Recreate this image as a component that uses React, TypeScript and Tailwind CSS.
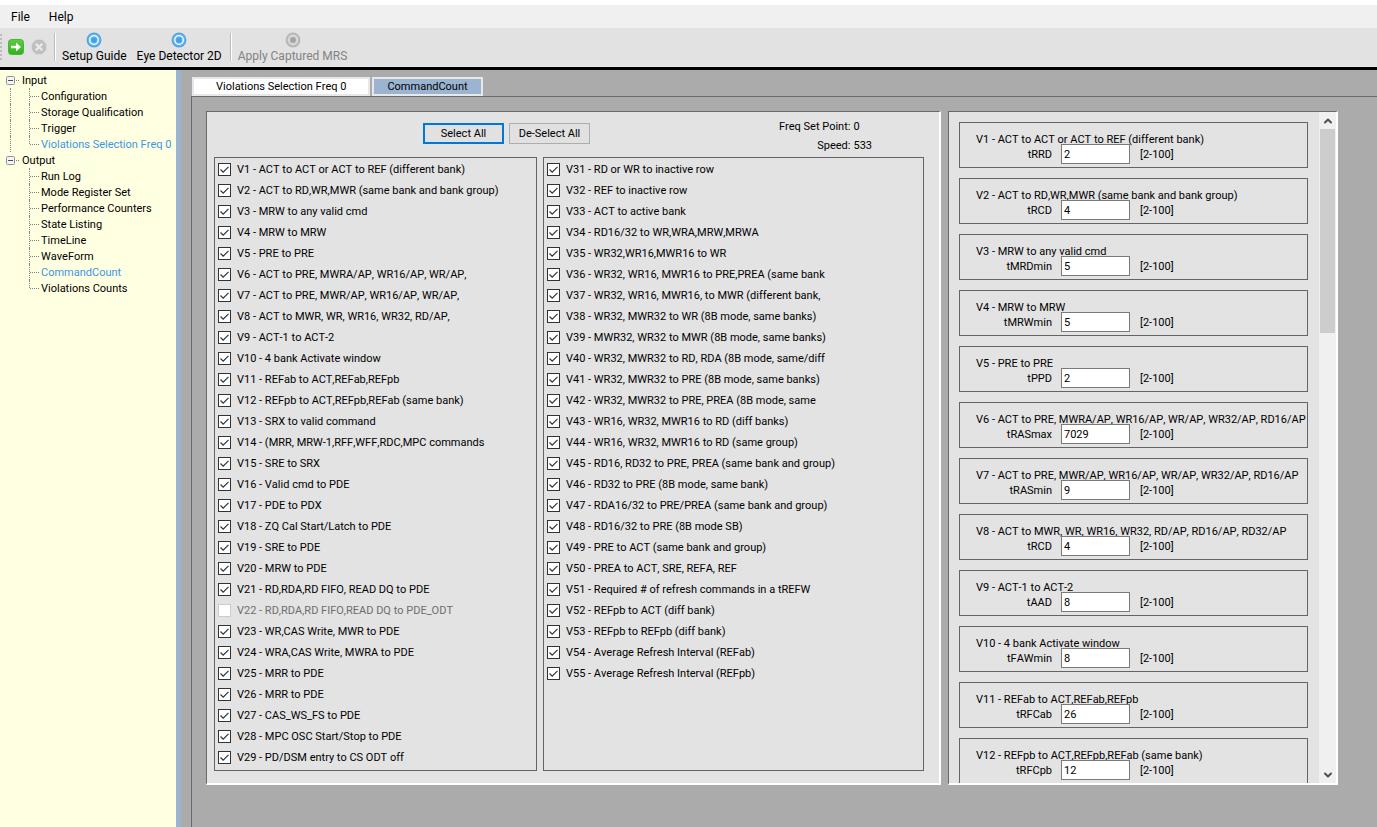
import { useState } from "react";
import { ChevronDown, ChevronUp } from "lucide-react";
import clsx from "clsx";

const inputItems = [
  "Configuration",
  "Storage Qualification",
  "Trigger",
  "Violations Selection Freq 0",
];

const outputItems = [
  "Run Log",
  "Mode Register Set",
  "Performance Counters",
  "State Listing",
  "TimeLine",
  "WaveForm",
  "CommandCount",
  "Violations Counts",
];

const openPages = ["Violations Selection Freq 0", "CommandCount"];

const leftChecks = [
  "V1 - ACT to ACT or ACT to REF (different bank)",
  "V2 - ACT to RD,WR,MWR (same bank and bank group)",
  "V3 - MRW to any valid cmd",
  "V4 - MRW to MRW",
  "V5 - PRE to PRE",
  "V6 - ACT to PRE, MWRA/AP, WR16/AP, WR/AP,",
  "V7 - ACT to PRE, MWR/AP, WR16/AP, WR/AP,",
  "V8 - ACT to MWR, WR, WR16, WR32, RD/AP,",
  "V9 - ACT-1 to ACT-2",
  "V10 - 4 bank Activate window",
  "V11 - REFab to ACT,REFab,REFpb",
  "V12 - REFpb to ACT,REFpb,REFab (same bank)",
  "V13 - SRX to valid command",
  "V14 - (MRR, MRW-1,RFF,WFF,RDC,MPC commands",
  "V15 - SRE to SRX",
  "V16 - Valid cmd to PDE",
  "V17 - PDE to PDX",
  "V18 - ZQ Cal Start/Latch to PDE",
  "V19 - SRE to PDE",
  "V20 - MRW to PDE",
  "V21 - RD,RDA,RD FIFO, READ DQ to PDE",
  "V22 - RD,RDA,RD FIFO,READ DQ to PDE_ODT",
  "V23 - WR,CAS Write, MWR to PDE",
  "V24 - WRA,CAS Write, MWRA to PDE",
  "V25 - MRR to PDE",
  "V26 - MRR to PDE",
  "V27 - CAS_WS_FS to PDE",
  "V28 - MPC OSC Start/Stop to PDE",
  "V29 - PD/DSM entry to CS ODT off",
];

const rightChecks = [
  "V31 - RD or WR to inactive row",
  "V32 - REF to inactive row",
  "V33 - ACT to active bank",
  "V34 - RD16/32 to WR,WRA,MRW,MRWA",
  "V35 - WR32,WR16,MWR16 to WR",
  "V36 - WR32, WR16, MWR16 to PRE,PREA (same bank",
  "V37 - WR32, WR16, MWR16, to MWR (different bank,",
  "V38 - WR32, MWR32 to WR (8B mode, same banks)",
  "V39 - MWR32, WR32 to MWR (8B mode, same banks)",
  "V40 - WR32, MWR32 to RD, RDA (8B mode, same/diff",
  "V41 - WR32, MWR32 to PRE (8B mode, same banks)",
  "V42 - WR32, MWR32 to PRE, PREA (8B mode, same",
  "V43 - WR16, WR32, MWR16 to RD (diff banks)",
  "V44 - WR16, WR32, MWR16 to RD (same group)",
  "V45 - RD16, RD32 to PRE, PREA (same bank and group)",
  "V46 - RD32 to PRE (8B mode, same bank)",
  "V47 - RDA16/32 to PRE/PREA (same bank and group)",
  "V48 - RD16/32 to PRE (8B mode SB)",
  "V49 - PRE to ACT (same bank and group)",
  "V50 - PREA to ACT, SRE, REFA, REF",
  "V51 - Required # of refresh commands in a tREFW",
  "V52 - REFpb to ACT (diff bank)",
  "V53 - REFpb to REFpb (diff bank)",
  "V54 - Average Refresh Interval (REFab)",
  "V55 - Average Refresh Interval (REFpb)",
];

const disabledChecks = ["V22 - RD,RDA,RD FIFO,READ DQ to PDE_ODT"];

const params = [
  { title: "V1 - ACT to ACT or ACT to REF (different bank)", name: "tRRD", value: "2" },
  { title: "V2 - ACT to RD,WR,MWR (same bank and bank group)", name: "tRCD", value: "4" },
  { title: "V3 - MRW to any valid cmd", name: "tMRDmin", value: "5" },
  { title: "V4 - MRW to MRW", name: "tMRWmin", value: "5" },
  { title: "V5 - PRE to PRE", name: "tPPD", value: "2" },
  { title: "V6 - ACT to PRE, MWRA/AP, WR16/AP, WR/AP, WR32/AP, RD16/AP", name: "tRASmax", value: "7029" },
  { title: "V7 - ACT to PRE, MWR/AP, WR16/AP, WR/AP, WR32/AP, RD16/AP", name: "tRASmin", value: "9" },
  { title: "V8 - ACT to MWR, WR, WR16, WR32, RD/AP, RD16/AP, RD32/AP", name: "tRCD", value: "4" },
  { title: "V9 - ACT-1 to ACT-2", name: "tAAD", value: "8" },
  { title: "V10 - 4 bank Activate window", name: "tFAWmin", value: "8" },
  { title: "V11 - REFab to ACT,REFab,REFpb", name: "tRFCab", value: "26" },
  { title: "V12 - REFpb to ACT,REFpb,REFab (same bank)", name: "tRFCpb", value: "12" },
];

const RunIcon = () => (
  <svg viewBox="0 0 16 16" className="size-4">
    <defs>
      <linearGradient id="run" x1="0" y1="0" x2="0" y2="1">
        <stop offset="0" stopColor="#5ccb45" />
        <stop offset="1" stopColor="#2fb31c" />
      </linearGradient>
    </defs>
    <rect x="0.5" y="0.5" width="15" height="15" rx="3" fill="url(#run)" stroke="#43b832" />
    <path d="M3 6.8H8V3.6L13 8L8 12.4V9.2H3Z" fill="#fff" />
  </svg>
);

const StopIcon = () => (
  <svg viewBox="0 0 16 16" className="size-4">
    <path d="M5 .8H11L15.2 5V11L11 15.2H5L.8 11V5Z" fill="#c0c0c0" />
    <path d="M4.8 4.8L11.2 11.2M11.2 4.8L4.8 11.2" stroke="#ececec" strokeWidth="2.2" />
  </svg>
);

const TargetIcon = ({ muted = false }: { muted?: boolean }) => (
  <svg viewBox="0 0 16 16" className="size-4">
    <circle cx="8" cy="8" r="7.4" fill={muted ? "#b4b4b4" : "#4a9fe0"} />
    <circle cx="8" cy="8" r="6.4" fill={muted ? "#bebebe" : "#62b4f0"} />
    <circle cx="8" cy="8" r="4.3" fill={muted ? "#c4c4c4" : "#6ebcf4"} stroke={muted ? "#e2e2e2" : "#fff"} strokeWidth="1.3" />
    <circle cx="8" cy="8" r="2.8" fill={muted ? "#a4a4a4" : "#429fe8"} />
  </svg>
);

const Separator = () => <div className="h-7 w-[2px] border-l border-[#bdbdbd] bg-white" />;

const ToolButton = ({ label, disabled = false }: { label: string; disabled?: boolean }) => (
  <button disabled={disabled} className="flex flex-col items-center pt-[2px] text-black disabled:text-[#838383]">
    <TargetIcon muted={disabled} />
    <span className="leading-4">{label}</span>
  </button>
);

interface TreeGroupProps {
  label: string;
  items: string[];
  selected: string[];
  last?: boolean;
}

const TreeGroup = ({ label, items, selected, last = false }: TreeGroupProps) => (
  <li>
    <button className="flex h-4 items-center">
      <svg viewBox="0 0 9 9" className="ml-[6px] size-[9px]">
        <rect x="0.5" y="0.5" width="8" height="8" rx="1" fill="#f4f4f0" stroke="#919191" />
        <path d="M2 4.5H7" stroke="#3b4f81" />
      </svg>
      <span className="mr-[3px] ml-px w-[3px] border-t border-dotted border-[#808080]" />
      <span className="leading-[14px] pt-[2px]">{label}</span>
    </button>
    <ul>
      {items.map((item, i) => (
        <li key={item} className="flex h-4 pl-[10px]">
          <span className={clsx("w-[19px]", !last && "border-l border-dotted border-[#808080]")} />
          <span
            className={clsx(
              "border-l border-dotted border-[#808080]",
              i === items.length - 1 ? "h-2" : "h-4"
            )}
          />
          <span className="mt-2 mr-[2px] w-[9px] border-t border-dotted border-[#808080]" />
          <a
            href="#"
            className={clsx("leading-[18px] whitespace-nowrap", selected.includes(item) && "text-[#3d95e6]")}
          >
            {item}
          </a>
        </li>
      ))}
    </ul>
  </li>
);

interface CheckListProps {
  items: string[];
  checked: Record<string, boolean>;
  onToggle: (item: string) => void;
}

const CheckList = ({ items, checked, onToggle }: CheckListProps) => (
  <div className="border border-[#646464] pt-px pb-[2px] pl-[3px]">
    {items.map((item) => {
      const disabled = disabledChecks.includes(item);
      return (
        <label
          key={item}
          className={clsx("flex h-[21px] items-center gap-[6px] whitespace-nowrap", disabled && "text-[#6d6d6d]")}
        >
          <span className="relative size-[13px]">
            <input
              type="checkbox"
              checked={checked[item]}
              disabled={disabled}
              onChange={() => onToggle(item)}
              className="peer block size-[13px] appearance-none border border-[#333333] bg-white disabled:border-[#cccccc]"
            />
            <svg
              viewBox="0 0 13 13"
              className="pointer-events-none absolute inset-0 hidden size-[13px] peer-checked:block"
            >
              <path d="M2.5 6.5L5.2 9.2L10.5 3.8" fill="none" stroke="#333" strokeWidth="1.2" />
            </svg>
          </span>
          {item}
        </label>
      );
    })}
  </div>
);

const ParamCard = ({ title, name, value }: { title: string; name: string; value: string }) => {
  const id = title.split(" ")[0];
  return (
    <div className="h-[46px] shrink-0 overflow-hidden border border-[#646464] pt-[11px] pl-4 whitespace-nowrap">
      <p className="h-[10px] leading-3">{title}</p>
      <div className="flex h-5 items-center">
        <label htmlFor={id} className="w-[76px] pt-[2px] text-right">
          {name}
        </label>
        <input
          id={id}
          defaultValue={value}
          className="mr-[10px] ml-[9px] h-5 w-[69px] border border-[#7a7a7a] bg-white px-[2px]"
        />
        <span className="pt-[2px]">[2-100]</span>
      </div>
    </div>
  );
};

export default function App() {
  const [page, setPage] = useState(openPages[0]);
  const [checked, setChecked] = useState<Record<string, boolean>>(() =>
    Object.fromEntries([...leftChecks, ...rightChecks].map((c) => [c, !disabledChecks.includes(c)]))
  );

  const setAll = (value: boolean) =>
    setChecked((prev) =>
      Object.fromEntries(Object.keys(prev).map((c) => [c, value && !disabledChecks.includes(c)]))
    );

  const toggle = (item: string) => setChecked((prev) => ({ ...prev, [item]: !prev[item] }));

  return (
    <div className="flex min-h-screen flex-col bg-white pt-[5px] font-[Roboto,'Liberation_Sans',sans-serif] text-[11px] leading-4 text-black [font-kerning:none]">
      <nav className="flex h-[23px] items-center gap-[19px] bg-[#f0f0f0] pl-[11px] text-[12px]">
        <button>File</button>
        <button>Help</button>
      </nav>

      <div className="flex h-[39px] items-center border-b border-[#e8e8e8] bg-[#e2e2e2] text-[12px]">
        <div className="h-[26px] border-l-2 border-dotted border-[#bcbcbc]" />
        <button aria-label="Run" className="ml-[6px]">
          <RunIcon />
        </button>
        <button aria-label="Stop" disabled className="mr-[7px] ml-[7px]">
          <StopIcon />
        </button>
        <Separator />
        <div className="mr-2 ml-[6px] flex gap-[10px]">
          <ToolButton label="Setup Guide" />
          <ToolButton label="Eye Detector 2D" />
        </div>
        <Separator />
        <div className="ml-[6px]">
          <ToolButton label="Apply Captured MRS" disabled />
        </div>
      </div>

      <div className="flex grow border-t-[3px] border-black bg-[#ababab]">
        <aside className="w-[181px] shrink-0 border-r-[5px] border-[#9ab4d1] bg-[#ffffe1] pt-[2px]">
          <ul>
            <TreeGroup label="Input" items={inputItems} selected={openPages} />
            <TreeGroup label="Output" items={outputItems} selected={openPages} last />
          </ul>
        </aside>

        <main className="flex grow flex-col pt-[7px] pl-[10px]">
          <div role="tablist" className="flex gap-[2px] pl-px">
            {openPages.map((p) => (
              <button
                key={p}
                role="tab"
                aria-selected={p === page}
                onClick={() => setPage(p)}
                className={clsx(
                  "h-[19px] border-2 border-[#e8e8e8]",
                  p === page ? "bg-white px-[22px]" : "bg-[#9ab4d1] px-[13px]"
                )}
              >
                {p}
              </button>
            ))}
          </div>

          <div className="flex grow items-start border-t border-l border-[#696969] pt-[14px] pr-[39px] pl-[14px]">
            <div className="flex grow items-stretch gap-[7px]">
              <section className="flex-[710] border-t border-r-2 border-b-2 border-l border-t-[#696969] border-r-white border-b-white border-l-[#696969] bg-[#e3e3e3] pr-[15px] pb-3 pl-[7px]">
                <div className="flex h-[45px] items-start justify-between pt-[5px] pr-[52px]">
                  <div className="flex gap-[5px] pt-[6px] pl-[209px]">
                    <button
                      onClick={() => setAll(true)}
                      className="flex h-[21px] w-[81px] items-center justify-center border-2 border-[#0078d7] bg-[#e1e1e1]"
                    >
                      Select All
                    </button>
                    <button
                      onClick={() => setAll(false)}
                      className="flex h-[21px] w-[81px] items-center justify-center border border-[#adadad] bg-[#e1e1e1]"
                    >
                      De-Select All
                    </button>
                  </div>
                  <dl className="grid grid-cols-[auto_auto] gap-x-[3px] leading-[19px]">
                    <dt className="text-right">Freq Set Point:</dt>
                    <dd>0</dd>
                    <dt className="text-right">Speed:</dt>
                    <dd>533</dd>
                  </dl>
                </div>
                <div className="grid grid-cols-[323fr_381fr] gap-[6px]">
                  <CheckList items={leftChecks} checked={checked} onToggle={toggle} />
                  <CheckList items={rightChecks} checked={checked} onToggle={toggle} />
                </div>
              </section>

              <section className="flex flex-[387] border-t border-r-2 border-b-2 border-l border-t-[#696969] border-r-white border-b-white border-l-[#696969] bg-[#e3e3e3] contain-size">
                <div className="flex min-w-0 grow flex-col gap-[10px] overflow-hidden pt-[10px] pr-[11px] pl-[10px]">
                  {params.map((p) => (
                    <ParamCard key={p.title} {...p} />
                  ))}
                </div>
                <div className="flex w-[17px] shrink-0 flex-col bg-[#f0f0f0]">
                  <button aria-label="Scroll up" className="flex h-[17px] items-center justify-center">
                    <ChevronUp className="size-3 text-[#505050]" strokeWidth={4} />
                  </button>
                  <div className="flex grow flex-col px-px">
                    <div className="h-[32%] bg-[#cdcdcd]" />
                  </div>
                  <button aria-label="Scroll down" className="flex h-[17px] items-center justify-center">
                    <ChevronDown className="size-3 text-[#505050]" strokeWidth={4} />
                  </button>
                </div>
              </section>
            </div>
          </div>
        </main>
      </div>
    </div>
  );
}
